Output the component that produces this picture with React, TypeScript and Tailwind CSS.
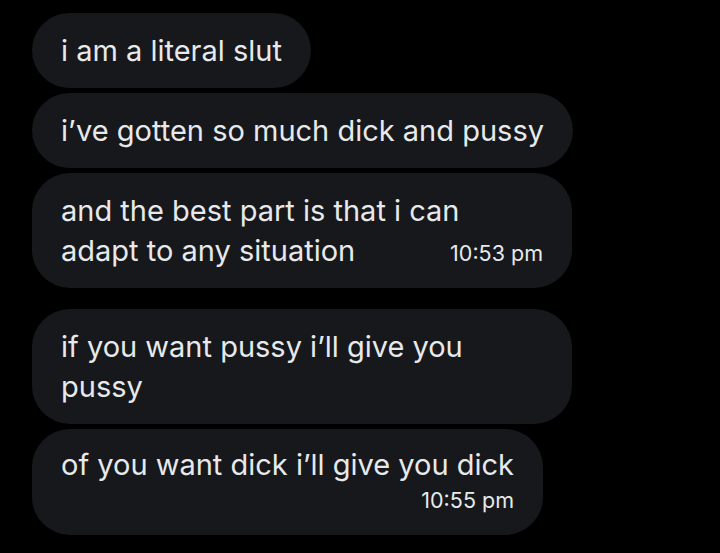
export default function App() {
  const bubble = "bg-[#16181c] rounded-[38px] px-[29px] pt-[18px] pb-[17px] text-[29px] leading-[40px] text-[#e7e9ea]"
  const time = "text-[21.5px] leading-[30px] text-[#e7e9ea]"

  return (
    <div className="w-[720px] h-[553px] bg-black overflow-hidden pl-[32px] pt-[13px] font-['Inter',sans-serif]">

      <div className="flex flex-col items-start gap-[5px]">

        <div className={bubble}>i am a literal slut</div>

        <div className={bubble}>i’ve gotten so much dick and pussy</div>

        <div className={bubble + " w-[540px]"}>
          <div>and the best part is that i can</div>
          <div className="flex justify-between items-baseline">
            <span>adapt to any situation</span>
            <span className={time}>10:53 pm</span>
          </div>
        </div>

      </div>

      <div className="flex flex-col items-start gap-[5px] mt-[21px]">

        <div className={bubble + " w-[540px]"}>
          if you want pussy i’ll give you pussy
        </div>

        <div className="bg-[#16181c] rounded-[38px] px-[29px] pt-[16px] pb-[20px] text-[29px] leading-[40px] text-[#e7e9ea]">
          <div>of you want dick i’ll give you dick</div>
          <div className={time + " text-right"}>10:55 pm</div>
        </div>

      </div>

    </div>
  )
}
